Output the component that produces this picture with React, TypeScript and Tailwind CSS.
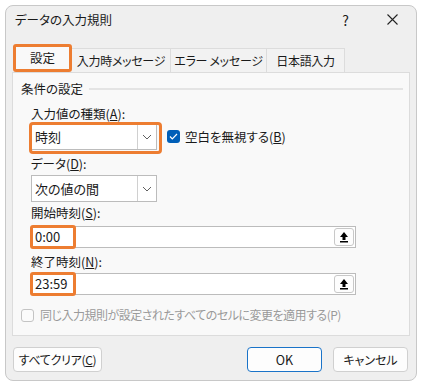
import React from 'react';

function Chevron() {
  return (
    <svg width="10" height="6" viewBox="0 0 10 6" fill="none">
      <path d="M1 1l4 4 4-4" stroke="#606060" strokeWidth="1" />
    </svg>
  );
}

function UpArrow() {
  return (
    <svg width="10" height="12" viewBox="0 0 10 12">
      <path d="M5 1L1 6h2.5v3h3V6H9z" fill="#000" />
      <rect x="1" y="10" width="8" height="1.5" fill="#000" />
    </svg>
  );
}

function Select({ value, mark }: { value: string; mark?: boolean }) {
  return (
    <div className="relative flex h-[27px] w-[126px] items-center border border-[#bcbcbc] bg-white">
      <span className="flex-1 pl-[3px] text-[13px] leading-[16px]">{value}</span>
      <div className="flex h-full w-[19px] items-center justify-center border-l border-[#d0d0d0]">
        <Chevron />
      </div>
      {mark && (
        <div className="absolute left-[-3px] top-[-2px] h-[32px] w-[133px] rounded-[4px] border-[3px] border-[#ed7d31]" />
      )}
    </div>
  );
}

function TimeInput({ value }: { value: string }) {
  return (
    <div className="relative flex h-[22px] w-[325px] items-center border border-[#bcbcbc] bg-white">
      <span className="flex-1 pl-[3px] text-[13px] leading-[16px]">{value}</span>
      <div className="mr-[1px] flex h-[18px] w-[20px] items-center justify-center rounded-[3px] border border-[#c8c8c8] bg-[#fdfdfd]">
        <UpArrow />
      </div>
      <div className="absolute left-[-2px] top-[-2px] h-[24px] w-[46px] rounded-[3px] border-[3px] border-[#ed7d31]" />
    </div>
  );
}

function Label({ text, k }: { text: string; k: string }) {
  return (
    <div className="whitespace-nowrap leading-[16px]">
      {text}(<span className="underline">{k}</span>):
    </div>
  );
}

export default function App() {
  const tabs = [
    { t: '入力時メッセージ', w: 'w-[99px]' },
    { t: 'エラー メッセージ', w: 'w-[96px]' },
    { t: '日本語入力', w: 'w-[78px]' },
  ];
  return (
    <div
      className="h-[386px] w-[421px] bg-white p-[5px] text-[12.5px] text-[#1a1a1a] [font-feature-settings:'palt']"
      style={{ fontFamily: '"Noto Sans CJK JP", "Noto Sans", sans-serif' }}
    >
      <div className="flex h-[376px] w-[412px] flex-col rounded-[8px] border border-[#c8c8c8] bg-[#efefef]">
        {/* title bar */}
        <div className="flex h-[37px] items-start pl-[9px] pr-[18px] pt-[5px]">
          <span className="flex-1 whitespace-nowrap leading-[18px]">データの入力規則</span>
          <span className="mr-[38px] text-[14px] leading-[18px]">?</span>
          <svg className="mt-[3px]" width="11" height="11" viewBox="0 0 11 11">
            <path d="M0.5 0.5l10 10M10.5 0.5l-10 10" stroke="#222" strokeWidth="1.1" />
          </svg>
        </div>

        {/* tabs */}
        <div className="flex h-[29px] items-end pl-[7px]">
          <div className="z-10 flex h-[28px] w-[59px] items-center justify-center rounded-[3px] border-[3px] border-[#ed7d31] bg-[#f9f9f9]">
            設定
          </div>
          {tabs.map((tab, i) => (
            <div
              key={i}
              className={`flex h-[24px] items-center justify-center whitespace-nowrap border border-b-0 border-l-0 border-[#dcdcdc] bg-[#f2f2f2] text-[12px] tracking-[-0.3px] ${tab.w}`}
            >
              {tab.t}
            </div>
          ))}
        </div>

        {/* panel */}
        <div className="mx-[6px] flex h-[264px] flex-col border border-[#dcdcdc] bg-[#f9f9f9] pl-[8px] pr-[6px]">
          <div className="mt-[7px] flex items-center">
            <span className="whitespace-nowrap leading-[18px]">条件の設定</span>
            <div className="ml-[6px] h-[2px] flex-1 bg-[#e4e4e4]" />
          </div>

          <div className="ml-[10px] mt-[8px]">
            <Label text="入力値の種類" k="A" />
          </div>
          <div className="ml-[10px] mt-[1px] flex items-center">
            <Select value="時刻" mark />
            <div className="ml-[10px] flex h-[13px] w-[13px] items-center justify-center rounded-[3px] bg-[#005fb8]">
              <svg width="9" height="7" viewBox="0 0 9 7" fill="none">
                <path d="M1 3.5l2.3 2.3L8 1" stroke="#fff" strokeWidth="1.2" />
              </svg>
            </div>
            <span className="ml-[5px] whitespace-nowrap leading-[16px]">
              空白を無視する(<span className="underline">B</span>)
            </span>
          </div>

          <div className="ml-[10px] mt-[6px]">
            <Label text="データ" k="D" />
          </div>
          <div className="ml-[10px] mt-[3px]">
            <Select value="次の値の間" />
          </div>

          <div className="ml-[10px] mt-[3px]">
            <Label text="開始時刻" k="S" />
          </div>
          <div className="ml-[10px] mt-[5px]">
            <TimeInput value="0:00" />
          </div>

          <div className="ml-[10px] mt-[6px]">
            <Label text="終了時刻" k="N" />
          </div>
          <div className="ml-[10px] mt-[3px]">
            <TimeInput value="23:59" />
          </div>

          <div className="mt-[12px] flex items-center text-[#9a9a9a]">
            <div className="h-[13px] w-[13px] rounded-[3px] border border-[#c4c4c4] bg-[#fbfbfb]" />
            <span className="ml-[6px] whitespace-nowrap text-[12px] leading-[16px] tracking-[-0.5px]">
              同じ入力規則が設定されたすべてのセルに変更を適用する(P)
            </span>
          </div>
        </div>

        {/* buttons */}
        <div className="mt-[11px] flex items-center pl-[7px] pr-[8px]">
          <button className="h-[25px] w-[89px] whitespace-nowrap rounded-[4px] border border-[#d0d0d0] bg-[#fdfdfd] text-[12px] leading-[16px] tracking-[-0.3px]">
            すべてクリア(<span className="underline">C</span>)
          </button>
          <div className="flex-1" />
          <button className="h-[25px] w-[75px] rounded-[4px] border border-[#1a73c8] bg-[#fdfdfd] leading-[16px]">
            OK
          </button>
          <button className="ml-[11px] h-[25px] w-[75px] whitespace-nowrap rounded-[4px] border border-[#d0d0d0] bg-[#fdfdfd] text-[12px] leading-[16px]">
            キャンセル
          </button>
        </div>
      </div>
    </div>
  );
}
